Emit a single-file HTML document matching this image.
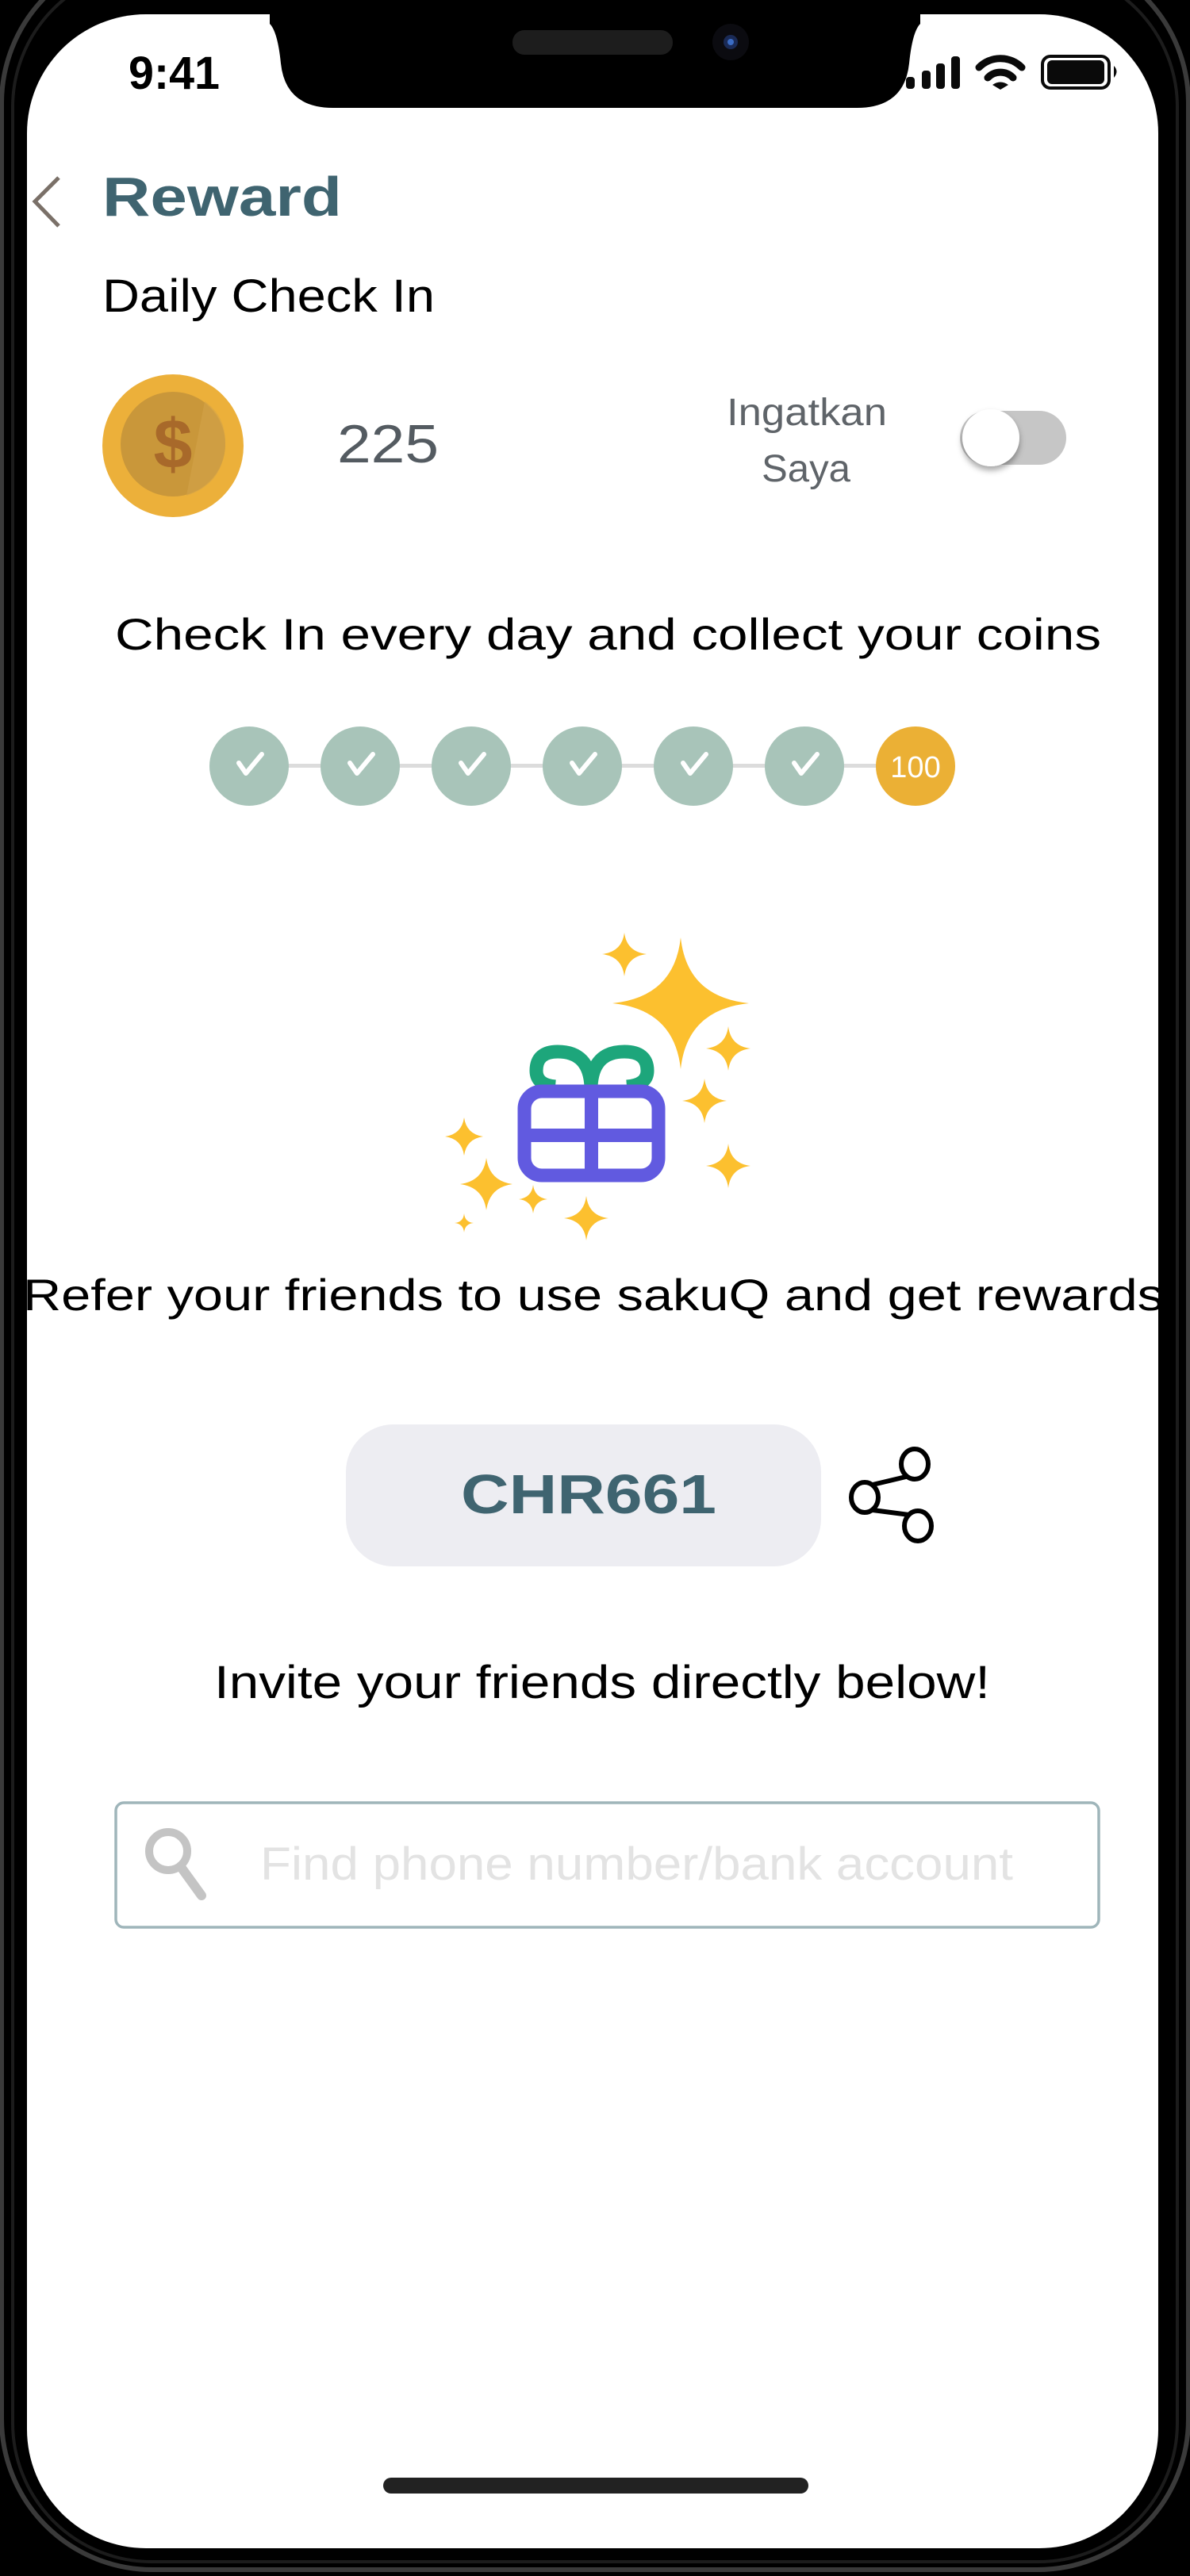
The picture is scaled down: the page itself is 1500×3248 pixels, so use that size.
<!DOCTYPE html>
<html><head><meta charset="utf-8"><style>
html,body{margin:0;padding:0;background:#000;}
body{width:1500px;height:3248px;overflow:hidden;position:relative;}
svg{position:absolute;left:0;top:0;}
</style></head><body>
<svg width="1500" height="3248" viewBox="0 0 1500 3248" xmlns="http://www.w3.org/2000/svg" font-family="'Liberation Sans', sans-serif">
<defs>
<filter id="sh" x="-50%" y="-50%" width="200%" height="200%"><feDropShadow dx="0" dy="5" stdDeviation="4" flood-color="#000" flood-opacity="0.35"/></filter>
</defs>
<rect width="1500" height="3248" fill="#000"/>
<rect x="2" y="-60" width="1496" height="3300" rx="190" fill="none" stroke="#3a3a3a" stroke-width="6"/>
<rect x="16" y="-40" width="1468" height="3270" rx="175" fill="none" stroke="#1c1c1c" stroke-width="4"/>
<!-- screen -->
<rect x="34" y="18" width="1426" height="3195" rx="150" fill="#fff"/>
<!-- notch -->
<path d="M340 0 L1160 0 L1160 30 Q1150 40 1146 80 Q1140 136 1080 136 L420 136 Q360 136 354 80 Q350 40 340 30 Z" fill="#000"/>
<rect x="646" y="38" width="202" height="31" rx="15" fill="#1d1d1d"/>
<circle cx="921" cy="53" r="23" fill="#0b0b10"/>
<circle cx="921" cy="53" r="9" fill="#1a2a55"/>
<circle cx="921" cy="53" r="4" fill="#3b6cc4"/>
<!-- status -->
<text x="162" y="112" font-size="58" font-weight="bold" fill="#000" textLength="115" lengthAdjust="spacingAndGlyphs">9:41</text>
<rect x="1142" y="97" width="11" height="15" rx="4" fill="#0a0a0a"/>
<rect x="1162" y="89" width="11" height="23" rx="4" fill="#0a0a0a"/>
<rect x="1180" y="80" width="11" height="32" rx="4" fill="#0a0a0a"/>
<rect x="1199" y="71" width="11" height="41" rx="4" fill="#0a0a0a"/>
<path d="M1234 85 A38 38 0 0 1 1288 85" fill="none" stroke="#0a0a0a" stroke-width="9" stroke-linecap="round"/>
<path d="M1245 98 A22 22 0 0 1 1277 98" fill="none" stroke="#0a0a0a" stroke-width="9" stroke-linecap="round"/>
<path d="M1251 107 L1261 113 L1271 107 Q1261 100 1251 107 Z" fill="#0a0a0a"/>
<rect x="1314" y="71" width="84" height="40" rx="10" fill="none" stroke="#0a0a0a" stroke-width="4"/>
<rect x="1320" y="76" width="72" height="30" rx="6" fill="#0a0a0a"/>
<path d="M1404 83 Q1411 90 1404 98 Z" fill="#0a0a0a"/>
<!-- header -->
<path d="M74 224 L44 254 L74 285" fill="none" stroke="#7a7068" stroke-width="5"/>
<text x="129" y="272" font-size="70" font-weight="bold" fill="#3f6470" textLength="302" lengthAdjust="spacingAndGlyphs">Reward</text>
<text x="129" y="393" font-size="58" fill="#000" textLength="419" lengthAdjust="spacingAndGlyphs">Daily Check In</text>
<!-- coin -->
<ellipse cx="218" cy="562" rx="89" ry="90" fill="#ecb03a"/>
<circle cx="218" cy="560" r="66" fill="#c9973a"/>
<path d="M258 506 Q285 525 284 560 Q282 610 235 625 Z" fill="#d4a44a" opacity="0.6"/>
<text x="218" y="590" font-size="88" font-weight="bold" fill="#a8692a" text-anchor="middle">$</text>
<text x="425" y="583" font-size="68" fill="#545b61" textLength="128" lengthAdjust="spacingAndGlyphs">225</text>
<text x="916" y="536" font-size="48" fill="#5f6469" textLength="202" lengthAdjust="spacingAndGlyphs">Ingatkan</text>
<text x="960" y="607" font-size="48" fill="#5f6469" textLength="112" lengthAdjust="spacingAndGlyphs">Saya</text>
<rect x="1210" y="518" width="134" height="68" rx="34" fill="#c6c6c6"/>
<circle cx="1249" cy="552" r="36" fill="#fff" filter="url(#sh)"/>
<!-- check in -->
<text x="145" y="819" font-size="56" fill="#000" textLength="1243" lengthAdjust="spacingAndGlyphs">Check In every day and collect your coins</text>
<rect x="314" y="963" width="840" height="5" fill="#dcdcdc"/>
<g fill="#a8c4b9">
<circle cx="314" cy="966" r="50"/><circle cx="454" cy="966" r="50"/><circle cx="594" cy="966" r="50"/><circle cx="734" cy="966" r="50"/><circle cx="874" cy="966" r="50"/><circle cx="1014" cy="966" r="50"/>
</g>
<g fill="none" stroke="#fff" stroke-width="6" stroke-linecap="round" stroke-linejoin="round">
<path d="M301 962 L310 975 L330 951"/><path d="M441 962 L450 975 L470 951"/><path d="M581 962 L590 975 L610 951"/><path d="M721 962 L730 975 L750 951"/><path d="M861 962 L870 975 L890 951"/><path d="M1001 962 L1010 975 L1030 951"/>
</g>
<circle cx="1154" cy="966" r="50" fill="#ebb035"/>
<text x="1154" y="980" font-size="38" fill="#fff" text-anchor="middle">100</text>
<!-- sparkles -->
<g fill="#fcc02f">
<path d="M858 1182 Q866 1257 944 1265 Q866 1273 858 1348 Q850 1273 772 1265 Q850 1257 858 1182 Z"/>
<path d="M787 1176 Q790 1200 815 1203 Q790 1206 787 1231 Q784 1206 759 1203 Q784 1200 787 1176 Z"/>
<path d="M918 1294 Q921 1319 946 1322 Q921 1325 918 1350 Q915 1325 890 1322 Q915 1319 918 1294 Z"/>
<path d="M888 1360 Q891 1385 916 1388 Q891 1391 888 1416 Q885 1391 860 1388 Q885 1385 888 1360 Z"/>
<path d="M918 1442 Q921 1467 946 1470 Q921 1473 918 1498 Q915 1473 890 1470 Q915 1467 918 1442 Z"/>
<path d="M585 1409 Q588 1430 609 1433 Q588 1436 585 1457 Q582 1436 561 1433 Q582 1430 585 1409 Z"/>
<path d="M613 1460 Q617 1489 646 1493 Q617 1497 613 1526 Q609 1497 580 1493 Q609 1489 613 1460 Z"/>
<path d="M672 1494 Q674 1510 690 1512 Q674 1514 672 1530 Q670 1514 654 1512 Q670 1510 672 1494 Z"/>
<path d="M739 1508 Q742 1533 767 1536 Q742 1539 739 1564 Q736 1539 711 1536 Q736 1533 739 1508 Z"/>
<path d="M585 1530 Q586 1541 597 1542 Q586 1543 585 1554 Q584 1543 573 1542 Q584 1541 585 1530 Z"/>
</g>
<!-- gift -->
<path d="M745 1370 Q743 1326 703 1326 Q676 1326 676 1350 Q676 1368 700 1370 M745 1370 Q747 1326 787 1326 Q816 1326 816 1350 Q816 1368 790 1370" fill="none" stroke="#1da67b" stroke-width="17"/>
<rect x="661" y="1376" width="169" height="106" rx="22" fill="none" stroke="#615ae0" stroke-width="17"/>
<rect x="737" y="1376" width="17" height="106" fill="#615ae0"/>
<rect x="661" y="1423" width="169" height="17" fill="#615ae0"/>
<!-- refer -->
<text x="29" y="1652" font-size="56" fill="#000" textLength="1438" lengthAdjust="spacingAndGlyphs">Refer your friends to use sakuQ and get rewards</text>
<rect x="436" y="1796" width="599" height="179" rx="60" fill="#ededf2"/>
<text x="581" y="1908" font-size="70" font-weight="bold" fill="#3f6470" textLength="322" lengthAdjust="spacingAndGlyphs">CHR661</text>
<g fill="none" stroke="#000" stroke-width="6">
<ellipse cx="1153" cy="1846" rx="17" ry="19"/>
<ellipse cx="1090" cy="1888" rx="17" ry="19"/>
<ellipse cx="1157" cy="1924" rx="17" ry="19"/>
<path d="M1100 1872 L1142 1862 M1100 1904 L1146 1910"/>
</g>
<text x="270" y="2141" font-size="58" fill="#000" textLength="978" lengthAdjust="spacingAndGlyphs">Invite your friends directly below!</text>
<rect x="146" y="2273" width="1239" height="157" rx="10" fill="#fff" stroke="#9fb5ba" stroke-width="3.5"/>
<circle cx="212" cy="2334" r="24" fill="none" stroke="#c4c4c4" stroke-width="10"/>
<path d="M228 2354 L254 2390" stroke="#c4c4c4" stroke-width="12" stroke-linecap="round"/>
<text x="328" y="2370" font-size="58" fill="#e3e3e3" textLength="949" lengthAdjust="spacingAndGlyphs">Find phone number/bank account</text>
<rect x="483" y="3124" width="536" height="20" rx="10" fill="#222"/>
</svg>
</body></html>
